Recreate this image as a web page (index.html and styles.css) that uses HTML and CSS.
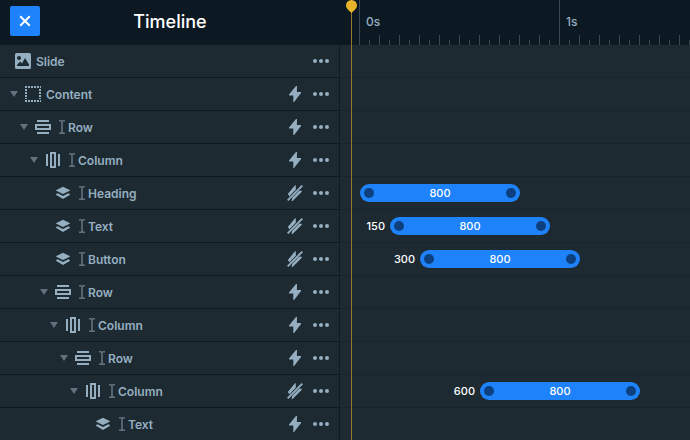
FILE: index.html
```html
<!DOCTYPE html>
<html lang="en">
<head>
<meta charset="utf-8">
<title>Timeline</title>
<link rel="stylesheet" href="styles.css">
</head>
<body>
<svg class="sprite" width="0" height="0" aria-hidden="true">
  <symbol id="caret" viewBox="0 0 8 6"><path d="M0 0h8L4 6z"/></symbol>
  <symbol id="image" viewBox="0 0 16 16"><path fill-rule="evenodd" d="M1.500 0h13A1.500 1.500 0 0 1 16 1.500v13a1.500 1.500 0 0 1-1.500 1.500h-13A1.500 1.500 0 0 1 0 14.500v-13A1.500 1.500 0 0 1 1.500 0zM4 3a2 2 0 1 0 0 4 2 2 0 0 0 0-4zM2 13h12v-1.500L10 5 7 10.500 5 8.500 2 12z"/></symbol>
  <symbol id="content" viewBox="0 0 16 16"><path fill="none" stroke="currentColor" stroke-width="2" stroke-dasharray="2 1 2 1 2 1 2 1 2 1 1 0" d="M0 1h16M0 15h16"/><path fill="none" stroke="currentColor" stroke-width="2" stroke-dasharray="2 1" d="M1 3v10M15 3v10"/></symbol>
  <symbol id="row" viewBox="0 0 16 16"><path d="M2 1h12v2H2zM2 13h12v2H2z"/><path fill="none" stroke="currentColor" stroke-width="2" d="M1 6h14v4H1z"/></symbol>
  <symbol id="column" viewBox="0 0 16 16"><path d="M1 2h2v12H1zM13 2h2v12h-2z"/><path fill="none" stroke="currentColor" stroke-width="2" d="M6 1h4v14H6z"/></symbol>
  <symbol id="layers" viewBox="0 0 16 16"><path d="M8 1.700 1.300 4.900q-.6.400 0 .8L8 9l6.700-3.300q.6-.4 0-.8zM2.600 8.300 8 11 13.400 8.300l1.300.8q.6.400 0 .8L8 13.900 1.300 9.900q-.6-.4 0-.8z"/></symbol>
  <symbol id="beam" viewBox="0 0 6 14"><path fill="none" stroke="currentColor" stroke-width="1.600" d="M0 .8h1.500Q3 .8 3 2.200 3 .8 4.500.8H6M3 2v10M0 13.200h1.500Q3 13.200 3 11.800q0 1.400 1.500 1.400H6"/></symbol>
  <symbol id="bolt" viewBox="0 0 12 16"><path d="M8 0H7L0 8.600v.9h4.300V16h.8L12 7v-.9H7.900z"/></symbol>
  <symbol id="nobolt" viewBox="0 0 16 16"><path fill="none" stroke="currentColor" stroke-width="1.900" d="M.7 15.300 15.300.7"/><path d="M8.800 0 7.600.8 1 8.800v1h2.800L8.800 4.800zM2.300 11.400 4.200 9.500H1.500zM5.300 12.700 4.600 15.900h1L14.800 6.800V5.800h-2.600z"/></symbol>
  <symbol id="dots" viewBox="0 0 16 4"><circle cx="2" cy="2" r="2"/><circle cx="8" cy="2" r="2"/><circle cx="14" cy="2" r="2"/></symbol>
</svg>
<div class="timeline">
  <header class="head">
    <div class="titlebar">
      <button class="close" aria-label="Close"><svg viewBox="0 0 12 12"><path d="m1.200 1.200 9.600 9.600m0-9.600-9.600 9.600"/></svg></button>
      <h1 class="title">Timeline</h1>
    </div>
    <div class="ruler"><span class="second">0s</span><span class="second">1s</span></div>
  </header>

  <div class="line"><div class="node d0"><svg class="icon"><use href="#image"/></svg><span class="name">Slide</span><svg class="dots"><use href="#dots"/></svg></div><div class="track"></div></div>

  <div class="line"><div class="node d1"><svg class="caret"><use href="#caret"/></svg><svg class="icon"><use href="#content"/></svg><span class="name">Content</span><svg class="bolt"><use href="#bolt"/></svg><svg class="dots"><use href="#dots"/></svg></div><div class="track"></div></div>

  <div class="line"><div class="node d2"><svg class="caret"><use href="#caret"/></svg><svg class="icon"><use href="#row"/></svg><svg class="beam"><use href="#beam"/></svg><span class="name">Row</span><svg class="bolt"><use href="#bolt"/></svg><svg class="dots"><use href="#dots"/></svg></div><div class="track"></div></div>

  <div class="line"><div class="node d3"><svg class="caret"><use href="#caret"/></svg><svg class="icon"><use href="#column"/></svg><svg class="beam"><use href="#beam"/></svg><span class="name">Column</span><svg class="bolt"><use href="#bolt"/></svg><svg class="dots"><use href="#dots"/></svg></div><div class="track"></div></div>

  <div class="line"><div class="node d4"><svg class="icon"><use href="#layers"/></svg><svg class="beam"><use href="#beam"/></svg><span class="name">Heading</span><svg class="nobolt"><use href="#nobolt"/></svg><svg class="dots"><use href="#dots"/></svg></div><div class="track"><span class="delay" style="width:20px"></span><span class="bar">800</span></div></div>

  <div class="line"><div class="node d4"><svg class="icon"><use href="#layers"/></svg><svg class="beam"><use href="#beam"/></svg><span class="name">Text</span><svg class="nobolt"><use href="#nobolt"/></svg><svg class="dots"><use href="#dots"/></svg></div><div class="track"><span class="delay" style="width:50px">150</span><span class="bar">800</span></div></div>

  <div class="line"><div class="node d4"><svg class="icon"><use href="#layers"/></svg><svg class="beam"><use href="#beam"/></svg><span class="name">Button</span><svg class="nobolt"><use href="#nobolt"/></svg><svg class="dots"><use href="#dots"/></svg></div><div class="track"><span class="delay" style="width:80px">300</span><span class="bar">800</span></div></div>

  <div class="line"><div class="node d4"><svg class="caret"><use href="#caret"/></svg><svg class="icon"><use href="#row"/></svg><svg class="beam"><use href="#beam"/></svg><span class="name">Row</span><svg class="bolt"><use href="#bolt"/></svg><svg class="dots"><use href="#dots"/></svg></div><div class="track"></div></div>

  <div class="line"><div class="node d5"><svg class="caret"><use href="#caret"/></svg><svg class="icon"><use href="#column"/></svg><svg class="beam"><use href="#beam"/></svg><span class="name">Column</span><svg class="bolt"><use href="#bolt"/></svg><svg class="dots"><use href="#dots"/></svg></div><div class="track"></div></div>

  <div class="line"><div class="node d6"><svg class="caret"><use href="#caret"/></svg><svg class="icon"><use href="#row"/></svg><svg class="beam"><use href="#beam"/></svg><span class="name">Row</span><svg class="bolt"><use href="#bolt"/></svg><svg class="dots"><use href="#dots"/></svg></div><div class="track"></div></div>

  <div class="line"><div class="node d7"><svg class="caret"><use href="#caret"/></svg><svg class="icon"><use href="#column"/></svg><svg class="beam"><use href="#beam"/></svg><span class="name">Column</span><svg class="nobolt"><use href="#nobolt"/></svg><svg class="dots"><use href="#dots"/></svg></div><div class="track"><span class="delay" style="width:140px">600</span><span class="bar">800</span></div></div>

  <div class="line"><div class="node d8"><svg class="icon"><use href="#layers"/></svg><svg class="beam"><use href="#beam"/></svg><span class="name">Text</span><svg class="bolt"><use href="#bolt"/></svg><svg class="dots"><use href="#dots"/></svg></div><div class="track"></div></div>

  <div class="playhead"><svg viewBox="0 0 11 13"><path d="M5.500 0A5.500 5.500 0 0 1 11 5.500C11 8.500 8 10.500 5.500 13 3 10.500 0 8.500 0 5.500A5.500 5.500 0 0 1 5.500 0z"/></svg></div>
</div>
</body>
</html>
```
FILE: styles.css
```css
* { box-sizing: border-box; }
body {
  margin: 0;
  overflow: hidden;
  background: #1e2a32;
  font-family: Inter, "Liberation Sans", sans-serif;
}
svg { display: block; flex: none; fill: currentColor; }
.sprite { position: absolute; }
.timeline { position: relative; height: 440px; overflow: hidden; }

.head { display: grid; grid-template: 45px / 340px 1fr; height: 45px; background: #0c1822; }
.titlebar { display: grid; grid-template-columns: 30px 1fr 30px; padding: 6px 10px 9px; align-items: center; }
.close {
  display: grid; place-items: center;
  width: 30px; height: 30px; padding: 0;
  border: 0; border-radius: 2px;
  background: #1e82fa; color: #fff;
}
.close svg { width: 12px; height: 12px; fill: none; stroke: currentColor; stroke-width: 2; }
.title { margin: 0; padding-top: 2px; color: #fff; font-size: 18px; font-weight: 500; line-height: 28px; text-align: center; }
.ruler {
  display: flex;
  padding-left: 19px;
  background:
    repeating-linear-gradient(90deg, #3b474f 0 1px, transparent 1px 200px) 19px 0 / 100% 100% no-repeat,
    repeating-linear-gradient(90deg, #3b474f 0 1px, transparent 1px 20px) 19px 100% / 100% 10px no-repeat,
    repeating-linear-gradient(90deg, #3b474f 0 1px, transparent 1px 10px) 19px 100% / 100% 5px no-repeat;
}
.second { flex: 0 0 200px; padding-left: 7px; color: #95afc0; font-size: 12px; font-weight: 500; line-height: 43px; }

.line { display: grid; grid-template-columns: 340px 1fr; height: 33px; }
.node {
  display: flex; align-items: center;
  padding-right: 10px;
  border-right: 1px solid #0e1b25;
  border-bottom: 1px solid #0c1822;
  color: #95afc0;
}
.d0 { padding-left: 0; }
.d1 { padding-left: 10px; }
.d2 { padding-left: 20px; }
.d3 { padding-left: 30px; }
.d4 { padding-left: 40px; }
.d5 { padding-left: 50px; }
.d6 { padding-left: 60px; }
.d7 { padding-left: 70px; }
.d8 { padding-left: 80px; }
.caret { width: 8px; height: 6px; color: #5f727e; }
.icon { width: 16px; height: 16px; margin-left: 15px; }
.caret + .icon { margin-left: 7px; }
.beam { width: 6px; height: 14px; margin: 0 -2px 0 8px; color: #5f727e; }
.name { flex: 1; padding: 2px 0 0 5px; font-size: 12px; font-weight: 600; line-height: 16px; }
.bolt { width: 12px; height: 16px; margin-right: 12px; }
.nobolt { width: 16px; height: 16px; margin-right: 10px; }
.dots { width: 16px; height: 4px; }

.track {
  display: flex; align-items: center;
  border-bottom: 1px solid #19252d;
  color: #fff; font-size: 11px; font-weight: 500;
}
.delay { flex: none; padding-right: 5px; text-align: right; }
.bar {
  display: flex; align-items: center; justify-content: space-between;
  width: 160px; height: 18px; padding: 0 4px;
  border-radius: 9px;
  background: #1e82fa;
}
.bar::before, .bar::after { content: ""; width: 10px; height: 10px; border-radius: 50%; background: #0d407f; }

.playhead {
  position: absolute; top: 0; bottom: 0; left: 351px;
  width: 1px;
  background: #967a2b;
}
.playhead svg { width: 11px; height: 13px; margin-left: -5px; color: #e8b52a; }
```
